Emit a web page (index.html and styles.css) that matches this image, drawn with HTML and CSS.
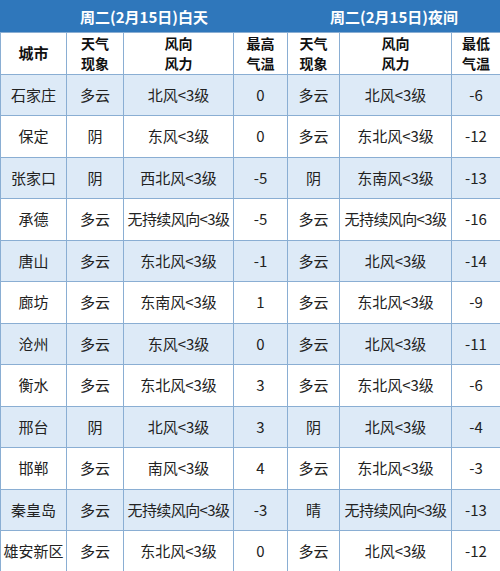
FILE: index.html
```html
<!DOCTYPE html>
<html lang="zh">
<head>
<meta charset="utf-8">
<link rel="stylesheet" href="styles.css">
</head>
<body>
<table class="wx">
<colgroup>
<col class="c1"><col class="c2"><col class="c3"><col class="c4"><col class="c5"><col class="c6"><col class="c7">
</colgroup>
<thead>
<tr class="top">
<th colspan="4">周二(2月15日)白天</th>
<th colspan="3">周二(2月15日)夜间</th>
</tr>
<tr class="sub">
<th class="one">城市</th>
<th>天气<br>现象</th>
<th>风向<br>风力</th>
<th>最高<br>气温</th>
<th>天气<br>现象</th>
<th>风向<br>风力</th>
<th>最低<br>气温</th>
</tr>
</thead>
<tbody>
<tr class="alt"><td>石家庄</td><td>多云</td><td>北风&lt;3级</td><td>0</td><td>多云</td><td>北风&lt;3级</td><td>-6</td></tr>
<tr><td>保定</td><td>阴</td><td>东风&lt;3级</td><td>0</td><td>多云</td><td>东北风&lt;3级</td><td>-12</td></tr>
<tr class="alt"><td>张家口</td><td>阴</td><td>西北风&lt;3级</td><td>-5</td><td>阴</td><td>东南风&lt;3级</td><td>-13</td></tr>
<tr><td>承德</td><td>多云</td><td class="tight">无持续风向&lt;3级</td><td>-5</td><td>多云</td><td class="tight">无持续风向&lt;3级</td><td>-16</td></tr>
<tr class="alt"><td>唐山</td><td>多云</td><td>东北风&lt;3级</td><td>-1</td><td>多云</td><td>北风&lt;3级</td><td>-14</td></tr>
<tr><td>廊坊</td><td>多云</td><td>东南风&lt;3级</td><td>1</td><td>多云</td><td>东北风&lt;3级</td><td>-9</td></tr>
<tr class="alt"><td>沧州</td><td>多云</td><td>东风&lt;3级</td><td>0</td><td>多云</td><td>北风&lt;3级</td><td>-11</td></tr>
<tr><td>衡水</td><td>多云</td><td>东北风&lt;3级</td><td>3</td><td>多云</td><td>东北风&lt;3级</td><td>-6</td></tr>
<tr class="alt"><td>邢台</td><td>阴</td><td>北风&lt;3级</td><td>3</td><td>阴</td><td>北风&lt;3级</td><td>-4</td></tr>
<tr><td>邯郸</td><td>多云</td><td>南风&lt;3级</td><td>4</td><td>多云</td><td>东北风&lt;3级</td><td>-3</td></tr>
<tr class="alt"><td>秦皇岛</td><td>多云</td><td class="tight">无持续风向&lt;3级</td><td>-3</td><td>晴</td><td class="tight">无持续风向&lt;3级</td><td>-13</td></tr>
<tr><td>雄安新区</td><td>多云</td><td>东北风&lt;3级</td><td>0</td><td>多云</td><td>北风&lt;3级</td><td>-12</td></tr>
</tbody>
</table>
</body>
</html>
```
FILE: styles.css
```css
html, body {
  margin: 0;
  padding: 0;
  background: #ffffff;
}
.wx {
  width: 500px;
  border-collapse: collapse;
  table-layout: fixed;
  font-family: "Noto Sans CJK SC", "Noto Sans", sans-serif;
  font-size: 15px;
  color: #222222;
}
.c1 { width: 66px; }
.c2 { width: 57px; }
.c3 { width: 110px; }
.c4 { width: 54px; }
.c5 { width: 52px; }
.c6 { width: 112px; }
.c7 { width: 49px; }
.wx th, .wx td {
  border: 1px solid #8aaed3;
  text-align: center;
  vertical-align: middle;
  padding: 0;
  white-space: nowrap;
  overflow: hidden;
}
.wx .top th {
  background: #2f77bb;
  color: #ffffff;
  font-weight: bold;
  font-size: 15px;
  height: 31px;
  border-color: #2f77bb;
  border-bottom-color: #8aaed3;
}
.wx .sub th {
  font-weight: bold;
  font-size: 14px;
  color: #111111;
  line-height: 20.3px;
  height: 40px;
}
.wx .sub th.one {
  font-size: 15px;
}
.wx tbody td {
  height: 40.5px;
  line-height: 18px;
}
.wx tbody tr.alt td {
  background: #ddeaf7;
}
.wx td.tight {
  letter-spacing: -0.6px;
}
```
